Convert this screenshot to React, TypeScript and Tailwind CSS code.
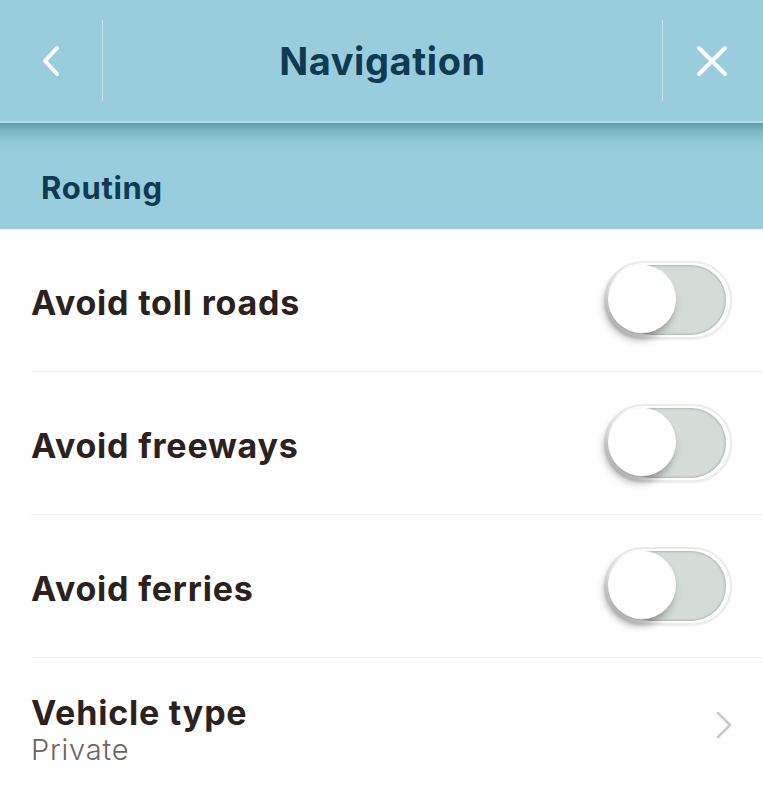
import React from "react";

const font = { fontFamily: "Inter, 'Noto Sans', sans-serif" };

function Toggle() {
  return (
    <div className="relative w-[128px] h-[78px] rounded-full bg-white border-2 border-[#ebebeb] shadow-[0_1px_2px_rgba(0,0,0,0.08)]">
      <div className="absolute left-[12px] right-[4px] top-[2px] bottom-[2px] rounded-full bg-[#d6ddd9] shadow-[inset_0_0_3px_rgba(0,0,0,0.35)]" />
      <div className="absolute left-[2px] top-[2px] w-[68px] h-[68px] rounded-full bg-white shadow-[-3px_6px_8px_rgba(0,0,0,0.35)]" />
    </div>
  );
}

function ToggleRow({ label }: { label: string }) {
  return (
    <div className="ml-[31px] h-[143px] border-b border-[#eef2f1] flex items-center justify-between pr-[31px]">
      <span className="text-[34px] font-bold text-[#2d211e] tracking-[0.8px] pt-[5px]">{label}</span>
      <Toggle />
    </div>
  );
}

export default function App() {
  return (
    <div className="w-[763px] h-[798px] bg-white overflow-hidden" style={font}>
      <div className="h-[121px] bg-[#99cddd] flex items-center">
        <div className="w-[102px] h-full flex items-center justify-center">
          <svg width="24" height="34" viewBox="0 0 24 34" className="ml-[2px]">
            <path d="M17 4 L5 17 L17 30" stroke="white" strokeWidth="4" fill="none" strokeLinecap="round" strokeLinejoin="round" />
          </svg>
        </div>
        <div className="w-px h-[81px] bg-[#c3e3ec]" />
        <div className="flex-1 text-center text-[38px] font-bold text-[#0e3a52] tracking-[0.6px] pt-[2px]">Navigation</div>
        <div className="w-px h-[81px] bg-[#c3e3ec]" />
        <div className="w-[100px] h-full flex items-center justify-center">
          <svg width="34" height="34" viewBox="0 0 34 34" className="mr-[2px]">
            <path d="M4 4 L30 30 M30 4 L4 30" stroke="white" strokeWidth="4" fill="none" strokeLinecap="round" />
          </svg>
        </div>
      </div>
      <div className="h-[2px] bg-[#b6dde8]" />
      <div className="h-[106px] bg-[linear-gradient(to_bottom,#5f9aab_0px,#7fb6c6_8px,#93c8d8_20px,#99cddd_30px)] flex items-end pb-[18px] pl-[41px]">
        <span className="text-[31px] font-bold text-[#0e3a52] tracking-[0.7px]">Routing</span>
      </div>
      <ToggleRow label="Avoid toll roads" />
      <ToggleRow label="Avoid freeways" />
      <ToggleRow label="Avoid ferries" />
      <div className="ml-[31px] h-[140px] flex items-center justify-between pr-[30px]">
        <div className="flex flex-col mt-[5px]">
          <span className="text-[34px] font-bold text-[#2d211e] leading-[38px] tracking-[0.8px]">Vehicle type</span>
          <span className="text-[29px] text-[#6e6462] leading-[36px] font-light tracking-[0.8px]">Private</span>
        </div>
        <svg width="18" height="30" viewBox="0 0 18 30" className="mt-[-6px]">
          <path d="M3 3 L15 15 L3 27" stroke="#c9c9c9" strokeWidth="2.5" fill="none" strokeLinecap="round" strokeLinejoin="round" />
        </svg>
      </div>
    </div>
  );
}
